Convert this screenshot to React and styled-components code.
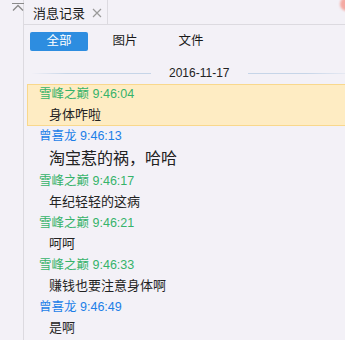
import React from 'react'
import styled, { createGlobalStyle } from 'styled-components'

const GlobalStyle = createGlobalStyle`
  html, body {
    margin: 0;
    padding: 0;
    background: #f3f1f7;
  }
  body {
    font-family: "Liberation Sans", "Noto Sans CJK SC", sans-serif;
    color: #222;
  }
`

const messages = [
  { id: 1, name: '雪峰之巅', time: '9:46:04', text: '身体咋啦', self: false, active: true },
  { id: 2, name: '曾喜龙', time: '9:46:13', text: '淘宝惹的祸，哈哈', self: true, big: true },
  { id: 3, name: '雪峰之巅', time: '9:46:17', text: '年纪轻轻的这病', self: false },
  { id: 4, name: '雪峰之巅', time: '9:46:21', text: '呵呵', self: false },
  { id: 5, name: '雪峰之巅', time: '9:46:33', text: '赚钱也要注意身体啊', self: false },
  { id: 6, name: '曾喜龙', time: '9:46:49', text: '是啊', self: true },
]

function App() {
  return (
    <>
      <GlobalStyle />
      <Window>
        <Side>
          <svg width="12" height="8" viewBox="0 0 12 8">
            <path d="M0 0.5H12" stroke="#8a8a8a" strokeWidth="1" />
            <path d="M1 7.5L6 2.5L11 7.5" stroke="#8a8a8a" strokeWidth="1.3" fill="none" />
          </svg>
        </Side>
        <Main>
          <TabBar>
            <Tab>
              消息记录
              <svg width="10" height="10" viewBox="0 0 10 10">
                <path d="M1 1L9 9M9 1L1 9" stroke="#9a9a9a" strokeWidth="1.2" />
              </svg>
            </Tab>
            <CornerDot />
          </TabBar>
          <Filters>
            <Filter active>全部</Filter>
            <Filter>图片</Filter>
            <Filter>文件</Filter>
          </Filters>
          <DateRow>
            <DateLine side="left" />
            <DateText>2016-11-17</DateText>
            <DateLine side="right" />
          </DateRow>
          <List>
            {messages.map((m) => (
              <Message key={m.id} active={m.active}>
                <Sender self={m.self}>
                  {m.name} {m.time}
                </Sender>
                <Body big={m.big}>{m.text}</Body>
              </Message>
            ))}
          </List>
        </Main>
      </Window>
    </>
  )
}

const Window = styled.div`
  display: flex;
  width: 345px;
  height: 340px;
  overflow: hidden;
`

const Side = styled.div`
  width: 24px;
  flex-shrink: 0;
  border-right: 1px solid #dcdae0;
  padding: 3px 0 0 12px;
  box-sizing: border-box;
  svg {
    display: block;
  }
`

const Main = styled.div`
  flex: 1;
  display: flex;
  flex-direction: column;
  min-width: 0;
`

const TabBar = styled.div`
  position: relative;
  display: flex;
  height: 25px;
  border-bottom: 1px solid #dcdae0;
  box-sizing: border-box;
`

const Tab = styled.div`
  display: flex;
  align-items: center;
  gap: 7px;
  width: 84px;
  padding-left: 9px;
  box-sizing: border-box;
  border-right: 1px solid #dcdae0;
  font-size: 13px;
  color: #1a1a1a;
  svg {
    margin-top: 1px;
  }
`

const CornerDot = styled.div`
  position: absolute;
  top: -3px;
  right: -9px;
  width: 14px;
  height: 14px;
  border-radius: 50%;
  background: #f4a9a2;
  filter: blur(1px);
`

const Filters = styled.div`
  display: flex;
  gap: 8px;
  padding: 7px 0 0 6px;
`

const Filter = styled.div`
  width: 58px;
  height: 19px;
  line-height: 19px;
  text-align: center;
  font-size: 12.5px;
  border-radius: 2px;
  background: ${(p) => (p.active ? '#2d8de0' : 'transparent')};
  color: ${(p) => (p.active ? '#fff' : '#1a1a1a')};
`

const DateRow = styled.div`
  display: flex;
  align-items: center;
  gap: 18px;
  height: 22px;
  margin-top: 11px;
  padding-left: 7px;
`

const DateLine = styled.div`
  flex: ${(p) => (p.side === 'left' ? '0 0 120px' : '1')};
  height: 1px;
  background: ${(p) =>
    p.side === 'left'
      ? 'linear-gradient(to right, rgba(200,214,232,0), #c6d5e8 30%)'
      : 'linear-gradient(to left, rgba(200,214,232,0.3), #c6d5e8 40%)'};
`

const DateText = styled.div`
  font-size: 12px;
  color: #222;
`

const List = styled.div`
  display: flex;
  flex-direction: column;
  padding-left: 3px;
`

const Message = styled.div`
  padding-left: 12px;
  background: ${(p) => (p.active ? '#feecc3' : 'transparent')};
  box-shadow: ${(p) =>
    p.active ? 'inset 1px 1px 0 #f9d88c, inset 0 -1px 0 #f9d88c' : 'none'};
`

const Sender = styled.div`
  line-height: 20px;
  font-size: 12.5px;
  color: ${(p) => (p.self ? '#1c7fe8' : '#36b36a')};
`

const Body = styled.div`
  padding-left: 10px;
  font-size: ${(p) => (p.big ? '16px' : '13px')};
  line-height: ${(p) => (p.big ? '25px' : '22px')};
  color: #222;
`

export default App
